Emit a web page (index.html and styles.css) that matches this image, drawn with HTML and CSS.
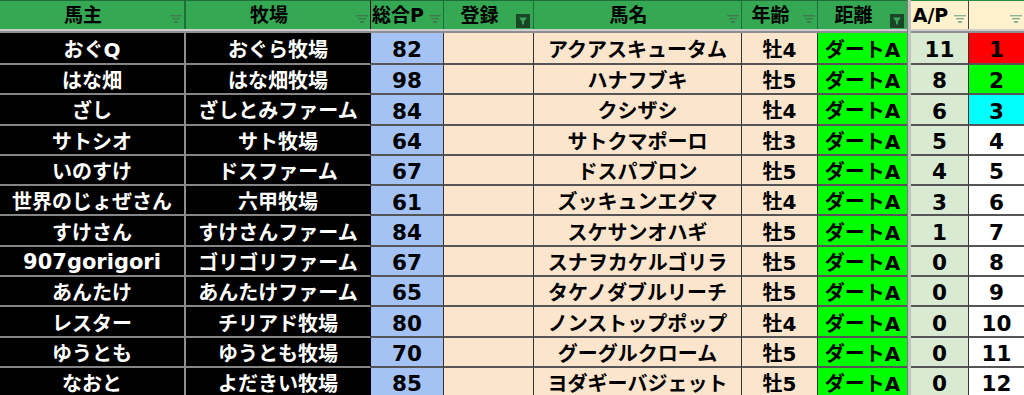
FILE: index.html
```html
<!DOCTYPE html>
<html lang="ja">
<head>
<meta charset="utf-8">
<title>馬主一覧</title>
<link rel="stylesheet" href="styles.css">
</head>
<body>
<div class="sheet">
  <div class="band"></div>
  <div class="split"></div>

  <div class="hd green c1"><span class="lbl">馬主</span><svg class="flt" width="12" height="8" viewBox="0 0 12 8"><rect x="0" y="0" width="12" height="1.4"/><rect x="2" y="3" width="8" height="1.4"/><rect x="4" y="6" width="4" height="2"/></svg></div>
  <div class="hd green c2"><span class="lbl">牧場</span><svg class="flt" width="12" height="8" viewBox="0 0 12 8"><rect x="0" y="0" width="12" height="1.4"/><rect x="2" y="3" width="8" height="1.4"/><rect x="4" y="6" width="4" height="2"/></svg></div>
  <div class="hd green"><span class="lbl">総合P</span><svg class="flt" width="12" height="8" viewBox="0 0 12 8"><rect x="0" y="0" width="12" height="1.4"/><rect x="2" y="3" width="8" height="1.4"/><rect x="4" y="6" width="4" height="2"/></svg></div>
  <div class="hd green"><span class="lbl">登録</span><svg class="btn" width="14" height="14" viewBox="0 0 14 14"><rect x="0" y="0" width="14" height="14" fill="#1c4426"/><path d="M3 3.5 H11 L8 7.5 V11 L6 10 V7.5 Z" fill="#36a856"/></svg></div>
  <div class="hd green"><span class="lbl">馬名</span><svg class="flt" width="12" height="8" viewBox="0 0 12 8"><rect x="0" y="0" width="12" height="1.4"/><rect x="2" y="3" width="8" height="1.4"/><rect x="4" y="6" width="4" height="2"/></svg></div>
  <div class="hd green"><span class="lbl">年齢</span><svg class="flt" width="12" height="8" viewBox="0 0 12 8"><rect x="0" y="0" width="12" height="1.4"/><rect x="2" y="3" width="8" height="1.4"/><rect x="4" y="6" width="4" height="2"/></svg></div>
  <div class="hd green last"><span class="lbl">距離</span><svg class="btn" width="14" height="14" viewBox="0 0 14 14"><rect x="0" y="0" width="14" height="14" fill="#1c4426"/><path d="M3 3.5 H11 L8 7.5 V11 L6 10 V7.5 Z" fill="#36a856"/></svg></div>
  <div class="hd cream"><span class="lbl">A/P</span><svg class="flt" width="12" height="8" viewBox="0 0 12 8"><rect x="0" y="0" width="12" height="1.4"/><rect x="2" y="3" width="8" height="1.4"/><rect x="4" y="6" width="4" height="2"/></svg></div>
  <div class="hd cream end"><span class="lbl"></span><svg class="flt" width="12" height="8" viewBox="0 0 12 8"><rect x="0" y="0" width="12" height="1.4"/><rect x="2" y="3" width="8" height="1.4"/><rect x="4" y="6" width="4" height="2"/></svg></div>

  <div class="b own">おぐQ</div><div class="b farm">おぐら牧場</div><div class="b pt">82</div><div class="b reg"></div><div class="b name">アクアスキュータム</div><div class="b age">牡4</div><div class="b dist">ダートA</div><div class="b ap">11</div><div class="b rank red">1</div>
  <div class="b own">はな畑</div><div class="b farm">はな畑牧場</div><div class="b pt">98</div><div class="b reg"></div><div class="b name">ハナフブキ</div><div class="b age">牡5</div><div class="b dist">ダートA</div><div class="b ap">8</div><div class="b rank lime">2</div>
  <div class="b own">ざし</div><div class="b farm">ざしとみファーム</div><div class="b pt">84</div><div class="b reg"></div><div class="b name">クシザシ</div><div class="b age">牡4</div><div class="b dist">ダートA</div><div class="b ap">6</div><div class="b rank cyan">3</div>
  <div class="b own">サトシオ</div><div class="b farm">サト牧場</div><div class="b pt">64</div><div class="b reg"></div><div class="b name">サトクマポーロ</div><div class="b age">牡3</div><div class="b dist">ダートA</div><div class="b ap">5</div><div class="b rank">4</div>
  <div class="b own">いのすけ</div><div class="b farm">ドスファーム</div><div class="b pt">67</div><div class="b reg"></div><div class="b name">ドスパブロン</div><div class="b age">牡5</div><div class="b dist">ダートA</div><div class="b ap">4</div><div class="b rank">5</div>
  <div class="b own">世界のじょぜさん</div><div class="b farm">六甲牧場</div><div class="b pt">61</div><div class="b reg"></div><div class="b name">ズッキュンエグマ</div><div class="b age">牡4</div><div class="b dist">ダートA</div><div class="b ap">3</div><div class="b rank">6</div>
  <div class="b own">すけさん</div><div class="b farm">すけさんファーム</div><div class="b pt">84</div><div class="b reg"></div><div class="b name">スケサンオハギ</div><div class="b age">牡5</div><div class="b dist">ダートA</div><div class="b ap">1</div><div class="b rank">7</div>
  <div class="b own latin">907gorigori</div><div class="b farm">ゴリゴリファーム</div><div class="b pt">67</div><div class="b reg"></div><div class="b name">スナヲカケルゴリラ</div><div class="b age">牡5</div><div class="b dist">ダートA</div><div class="b ap">0</div><div class="b rank">8</div>
  <div class="b own">あんたけ</div><div class="b farm">あんたけファーム</div><div class="b pt">65</div><div class="b reg"></div><div class="b name">タケノダブルリーチ</div><div class="b age">牡5</div><div class="b dist">ダートA</div><div class="b ap">0</div><div class="b rank">9</div>
  <div class="b own">レスター</div><div class="b farm">チリアド牧場</div><div class="b pt">80</div><div class="b reg"></div><div class="b name">ノンストップポップ</div><div class="b age">牡4</div><div class="b dist">ダートA</div><div class="b ap">0</div><div class="b rank">10</div>
  <div class="b own">ゆうとも</div><div class="b farm">ゆうとも牧場</div><div class="b pt">70</div><div class="b reg"></div><div class="b name">グーグルクローム</div><div class="b age">牡5</div><div class="b dist">ダートA</div><div class="b ap">0</div><div class="b rank">11</div>
  <div class="b own">なおと</div><div class="b farm">よだきい牧場</div><div class="b pt">85</div><div class="b reg"></div><div class="b name">ヨダギーバジェット</div><div class="b age">牡5</div><div class="b dist">ダートA</div><div class="b ap">0</div><div class="b rank">12</div>
</div>
</body>
</html>
```
FILE: styles.css
```css
html, body {
  margin: 0;
  padding: 0;
  background: #ffffff;
}

body {
  width: 1024px;
  height: 395px;
  overflow: hidden;
  font-family: "DejaVu Sans", "Noto Sans CJK JP", sans-serif;
  font-weight: 700;
  color: #000;
}

.sheet {
  display: grid;
  grid-template-columns: 186px 185px 73px 90px 208px 76px 89px 4px 58px 55px;
  grid-template-rows: 29px 4px 32px repeat(11, 30.3px);
}

.band {
  grid-column: 1 / -1;
  grid-row: 2;
  box-sizing: border-box;
  background: #cdcdcd;
  border-bottom: 2px solid #8e8e8e;
}

.split {
  grid-column: 8;
  grid-row: 1 / -1;
  box-sizing: border-box;
  background: #c4c4c4;
  border-left: 1px solid #7d7d7d;
  z-index: 1;
}

/* header */
.hd {
  box-sizing: border-box;
  display: grid;
  grid-template-columns: minmax(0, 1fr) 18px;
  align-items: center;
  border-top: 1px solid #1f6e37;
  border-right: 1px solid #1f6e37;
  font-size: 19px;
  line-height: 1;
}

.hd.green {
  background: #34a853;
}

.hd.green .flt {
  fill: #3f7a4f;
}

.hd.c1 {
  border-right: 2px solid #1f6e37;
}

.hd.c2 {
  border-right: 1px solid #111;
}

.hd.last {
  border-right: none;
}

.hd.cream {
  background: #fff2cc;
  border-top-color: #2d8a47;
  border-right-color: #444;
}

.hd.cream .flt {
  fill: #8cae93;
}

.hd.end {
  border-right: none;
}

.lbl {
  display: flex;
  justify-content: center;
  white-space: nowrap;
  padding-top: 1px;
}

.flt {
  justify-self: end;
  align-self: end;
  margin: 0 2px 6px 0;
}

.btn {
  justify-self: end;
  align-self: end;
  margin: 0 3px 1px 0;
}

/* body cells */
.b {
  box-sizing: border-box;
  display: flex;
  align-items: center;
  justify-content: center;
  white-space: nowrap;
  font-size: 20px;
  line-height: 1;
  padding-top: 4px;
  border-bottom: 2px solid #555;
  border-right: 1px solid #333;
}

.own {
  background: #000;
  color: #fff;
  border-bottom-color: #858585;
  border-right: 2px solid #8e8e8e;
}

.own.latin {
  font-size: 21px;
}

.farm {
  background: #000;
  color: #fff;
  border-bottom-color: #858585;
  border-right: 1px solid #000;
}

.pt {
  background: #a4c2f4;
  font-size: 21.5px;
}

.reg,
.name,
.age {
  background: #fce5cd;
}

.dist {
  background: #00ff00;
  border-right: none;
}

.ap {
  background: #d9ead3;
  border-right: 1px solid #333;
  font-size: 21.5px;
}

.rank {
  background: #ffffff;
  border-right: none;
  font-size: 21.5px;
}

.rank.red {
  background: #ff0000;
}

.rank.lime {
  background: #00ff00;
}

.rank.cyan {
  background: #00ffff;
}
```
